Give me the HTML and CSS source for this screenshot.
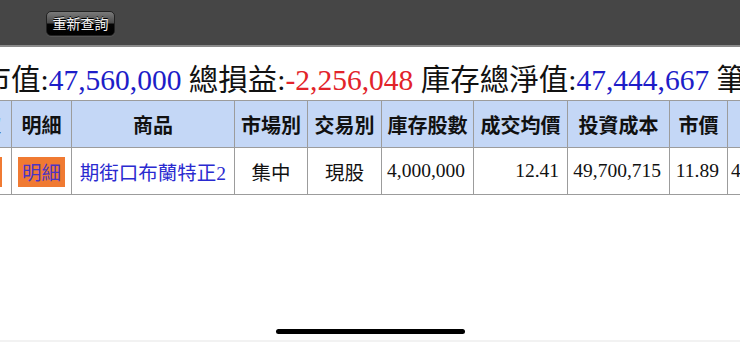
FILE: index.html
```html
<!DOCTYPE html>
<html lang="zh-Hant">
<head>
<meta charset="utf-8">
<title>庫存查詢</title>
<link rel="stylesheet" href="styles.css">
</head>
<body>
<div class="topbar">
  <button class="refresh" type="button">重新查詢</button>
</div>
<div class="viewport">
  <div class="inner">
    <div class="summary">總市值:<span class="blue">47,560,000</span> 總損益:<span class="red">-2,256,048</span> 庫存總淨值:<span class="blue">47,444,667</span> 筆數:<span class="blue">1</span></div>
    <table class="grid">
      <colgroup>
        <col class="c0"><col class="c1"><col class="c2"><col class="c3"><col class="c4"><col class="c5"><col class="c6"><col class="c7"><col class="c8"><col class="c9">
      </colgroup>
      <thead>
        <tr>
          <th>選取</th>
          <th>明細</th>
          <th>商品</th>
          <th>市場別</th>
          <th>交易別</th>
          <th>庫存股數</th>
          <th>成交均價</th>
          <th>投資成本</th>
          <th>市價</th>
          <th>參考市值</th>
        </tr>
      </thead>
      <tbody>
        <tr>
          <td class="ctr"><span class="detail">明細</span></td>
          <td class="ctr"><span class="detail">明細</span></td>
          <td class="name">期街口布蘭特正2</td>
          <td class="ctr">集中</td>
          <td class="ctr">現股</td>
          <td class="num">4,000,000</td>
          <td class="num">12.41</td>
          <td class="num">49,700,715</td>
          <td class="num">11.89</td>
          <td class="lft">47,560,000</td>
        </tr>
      </tbody>
    </table>
  </div>
</div>
<div class="home-indicator"></div>
<div class="bottom-strip"></div>
</body>
</html>
```

FILE: styles.css
```css
html, body {
  margin: 0;
  padding: 0;
  background: #ffffff;
}
body {
  width: 740px;
  height: 342px;
  overflow: hidden;
  position: relative;
  font-family: "Liberation Serif", "Noto Sans CJK TC", serif;
}
.topbar {
  height: 45px;
  background: #464646;
  border-bottom: 2px solid #8a8a8a;
  display: flex;
  align-items: center;
  padding-left: 46px;
  box-sizing: content-box;
}
.refresh {
  width: 69px;
  height: 25px;
  margin-top: 1px;
  padding: 0;
  border: 1px solid #222;
  border-radius: 5px;
  background: linear-gradient(#7a7a7a 0%, #4a4a4a 48%, #050505 52%, #000 100%);
  color: #f4f4f4;
  font-family: "Noto Sans CJK TC", sans-serif;
  font-size: 14px;
  line-height: 23px;
  text-shadow: 0 -1px 0 #000;
  box-shadow: 0 1px 0 rgba(255,255,255,0.08);
}
.viewport {
  width: 740px;
  overflow: hidden;
}
.inner {
  margin-left: -50px;
  white-space: nowrap;
}
.summary {
  height: 53px;
  box-sizing: border-box;
  padding-top: 17px;
  padding-left: 2px;
  font-size: 29.5px;
  line-height: 32px;
  color: #111;
}
.blue { color: #1d1dc8; }
.red { color: #e2232a; }
.grid {
  border-collapse: collapse;
  table-layout: fixed;
  width: 897px;
  font-size: 19.5px;
  color: #111;
}
.c0 { width: 61px; }
.c1 { width: 60px; }
.c2 { width: 163px; }
.c3 { width: 73px; }
.c4 { width: 74px; }
.c5 { width: 92px; }
.c6 { width: 94px; }
.c7 { width: 102px; }
.c8 { width: 58px; }
.c9 { width: 120px; }
.grid th, .grid td {
  border: 1px solid #9c9c9c;
  height: 46px;
  padding: 0;
  overflow: hidden;
  white-space: nowrap;
}
.grid th {
  background: #c4d7f6;
  font-family: "Noto Sans CJK TC", sans-serif;
  font-size: 20px;
  font-weight: bold;
  text-align: center;
}
.grid td.ctr {
  text-align: center;
  font-family: "Noto Sans CJK TC", sans-serif;
}
.grid td.name {
  text-align: center;
  color: #2a2ad0;
}
.grid td.num {
  text-align: right;
  padding-right: 8px;
}
.grid td.lft {
  text-align: left;
  padding-left: 3px;
}
.detail {
  display: inline-block;
  width: 47px;
  height: 30px;
  line-height: 30px;
  background: #f07a32;
  color: #4b34c4;
  font-size: 19.5px;
  vertical-align: middle;
}
.grid td:first-child .detail {
  position: relative;
  left: -3px;
}
.home-indicator {
  position: absolute;
  left: 276px;
  top: 329px;
  width: 189px;
  height: 5px;
  border-radius: 3px;
  background: #000;
}
.bottom-strip {
  position: absolute;
  left: 0;
  bottom: 0;
  width: 740px;
  height: 2px;
  background: #f2f2f2;
}
```
